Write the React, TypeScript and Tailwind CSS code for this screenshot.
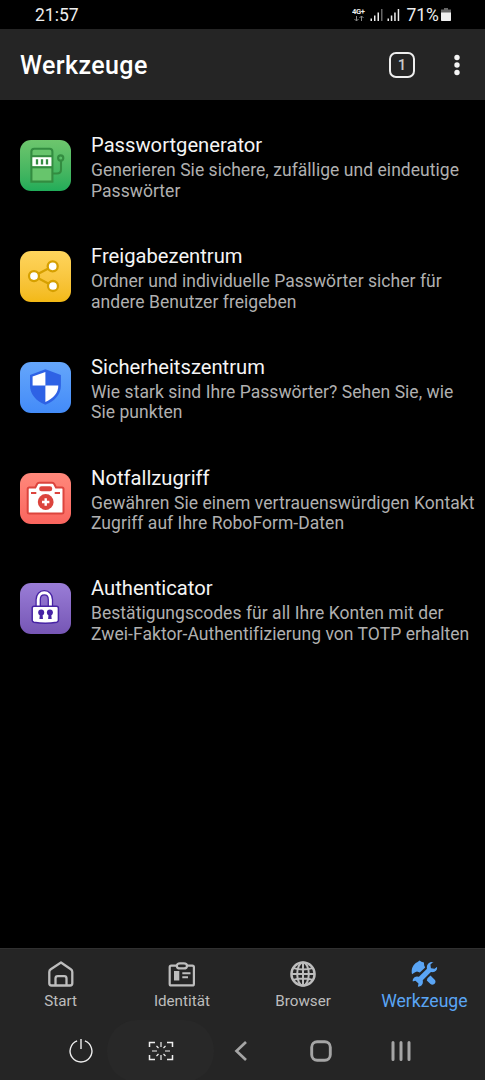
import type { ReactNode } from "react";

function GeneratorArt() {
  return (
    <g fill="none" stroke="#338c40" strokeWidth="2.1">
      <path d="M33 33.5h4c2.500 0 4-1.500 4-4V21" />
      <circle cx="40.700" cy="18" r="2.600" />
      <path d="M11.400 41.600V11.500c0-1.800 1.100-2.800 2.800-2.800h15.400c1.700 0 2.800 1 2.800 2.800v30.100z" fill="#67c56c" />
      <path d="M12 16.200h20" />
      <path d="M12.400 17.300h19v9h-19z" fill="#fff" stroke="none" />
      <path d="M12 27.300h20" />
      <path d="M17 19.300v5.300M22 19.300v5.300M27 19.300v5.300" strokeWidth="2.300" />
    </g>
  );
}

function ShareArt() {
  return (
    <g fill="#fff" stroke="#d6a000" strokeWidth="2.300">
      <path d="M32.700 15.300 14 25.100l19 9.900" fill="none" />
      <circle cx="32.700" cy="15.300" r="5" />
      <circle cx="14" cy="25.100" r="5" />
      <circle cx="33" cy="35" r="5" />
    </g>
  );
}

function ShieldArt() {
  return (
    <g>
      <path d="M25.400 7.200 40.900 13v10.500c0 9-6.200 15.600-15.500 19.200C16.200 39.100 10 32.500 10 23.500V13z" fill="#2e62e5" />
      <path d="M25.400 10v13.600H12.600v-9z" fill="#fff" />
      <path d="M25.400 23.600h12.900c0 7.300-4.600 12.900-12.900 16.300z" fill="#fff" />
    </g>
  );
}

function EmergencyArt() {
  return (
    <g>
      <path d="M9.200 14.500h6.100l1.800-3.500c.5-.9 1-1.200 2-1.200h13.100c1 0 1.500.3 2 1.200l1.800 3.500h6c1 0 1.500.5 1.500 1.500V39c0 1-.5 1.500-1.500 1.500H9.200c-1 0-1.500-.5-1.500-1.500V16c0-1 .5-1.500 1.500-1.500z" fill="#fff" stroke="#dc443d" strokeWidth="2" />
      <rect x="19.200" y="13.300" width="13" height="5" rx="2.300" fill="#dc443d" />
      <path d="M11 20h5.300M34.700 20H40" stroke="#dc443d" strokeWidth="2" />
      <circle cx="25.700" cy="29" r="7.900" fill="#dc443d" />
      <path d="M25.700 25.300v7.400M22 29h7.400" stroke="#fff" strokeWidth="2.400" />
    </g>
  );
}

function LockArt() {
  return (
    <g stroke="#4723a5">
      <path d="M18.200 23v-6.300c0-4.300 2.600-6.900 6.100-6.900s6.100 2.600 6.100 6.900V23" fill="none" strokeWidth="5.500" />
      <path d="M18.200 24v-7.300c0-4.300 2.600-6.900 6.100-6.900s6.100 2.600 6.100 6.900V24" fill="none" stroke="#fff" strokeWidth="2.900" />
      <path d="M14 23.300h22.500c1.300 0 1.900.6 1.900 1.900v12c0 1.100-.5 1.700-1.700 2-7 1.400-15.700 1.400-22.800 0-1.200-.3-1.700-.9-1.700-2v-12c0-1.300.5-1.900 1.800-1.900z" fill="#fff" strokeWidth="1.500" />
      <g fill="#4723a5" stroke="none">
        <circle cx="21.200" cy="29.400" r="3" />
        <circle cx="29.900" cy="29.400" r="3" />
        <path d="M20 30h2.400l.6 6h-3.600zM28.700 30h2.400l.6 6h-3.600z" />
      </g>
    </g>
  );
}

const tools: { title: string; lines: [string, string]; tile: string; art: ReactNode }[] = [
  { title: "Passwortgenerator", lines: ["Generieren Sie sichere, zufällige und eindeutige", "Passwörter"], tile: "from-[#6dc66d] to-[#20ac59]", art: <GeneratorArt /> },
  { title: "Freigabezentrum", lines: ["Ordner und individuelle Passwörter sicher für", "andere Benutzer freigeben"], tile: "from-[#ffd55c] to-[#f3b914]", art: <ShareArt /> },
  { title: "Sicherheitszentrum", lines: ["Wie stark sind Ihre Passwörter? Sehen Sie, wie", "Sie punkten"], tile: "from-[#65a6fb] to-[#438bf8]", art: <ShieldArt /> },
  { title: "Notfallzugriff", lines: ["Gewähren Sie einem vertrauenswürdigen Kontakt", "Zugriff auf Ihre RoboForm-Daten"], tile: "from-[#ff887b] to-[#fa655e]", art: <EmergencyArt /> },
  { title: "Authenticator", lines: ["Bestätigungscodes für all Ihre Konten mit der", "Zwei-Faktor-Authentifizierung von TOTP erhalten"], tile: "from-[#9a7dd7] to-[#7656b5]", art: <LockArt /> },
];

function StatusBar() {
  return (
    <div className="flex h-[29px] shrink-0 items-center pl-[35px] pr-[34px] text-[#eeeeee]">
      <span className="text-[17.5px] leading-[30px]">21:57</span>
      <svg className="ml-auto mr-[5px] h-[29px] w-[50px]" viewBox="0 0 50 29">
        <text x="0" y="14" fontSize="7.600" fontWeight="700" fill="#eee" textLength="13">4G+</text>
        <path d="M4.500 16v5m-2-2 2 2 2-2M9.500 21v-5m-2 2 2-2 2 2" fill="none" stroke="#888" strokeWidth="1" />
        <g fill="#eee">
          <path d="M18.500 18.500H20V21h-1.500zM22 15.500h1.500V21H22zM25.500 12.500H27V21h-1.500z" />
          <path d="M29 9h1.500v12H29z" fill="#666" />
          <path d="M35.500 18.500H37V21h-1.500zM38.800 15.500h1.500V21h-1.500zM42.200 12.500h1.500V21h-1.500zM45.700 9h1.500v12h-1.500z" />
        </g>
      </svg>
      <span className="text-[17.5px] leading-[30px] tracking-[-0.2px]">71%</span>
      <svg className="ml-[2.5px] h-[29px] w-[10px]" viewBox="0 0 10 29">
        <path d="M3 8h4v1.500h3V13H0V9.500h3z" fill="#666" />
        <path d="M0 12.500h10V20c0 .7-.3 1-1 1H1c-.7 0-1-.3-1-1z" fill="#eee" />
      </svg>
    </div>
  );
}

function HomeIcon() {
  return (
    <g fill="none" stroke="#bdbdbd" strokeWidth="2.300" strokeLinejoin="round">
      <path d="m14 2.500 9.800 6.700c1 .7 1.500 1.500 1.500 2.700v11.400c0 1.400-.8 2.200-2.200 2.200H4.500c-1.400 0-2.200-.8-2.200-2.200V11.900c0-1.200.5-2 1.500-2.700z" />
      <path d="M8.500 25.400v-7c0-1.500.8-2.300 2.300-2.300h6.400c1.500 0 2.300.8 2.300 2.300v7" />
    </g>
  );
}

function IdentityIcon() {
  return (
    <g fill="none" stroke="#bdbdbd" strokeWidth="2.200">
      <path d="M9.500 5.700H3.200c-1 0-1.500.5-1.500 1.500v16.700c0 1 .5 1.500 1.500 1.500h21.200c1 0 1.500-.5 1.500-1.500V7.200c0-1-.5-1.500-1.500-1.500h-6.100" />
      <path d="M12 3.400h3.800c2.200 0 3.200 1 3.200 2.500s-1 2.500-3.200 2.500H12c-2.200 0-3.200-1-3.200-2.500s1-2.500 3.200-2.500z" />
      <path d="M14.300 13.200h8.200M14.300 17.300h5.700" strokeWidth="1.900" />
      <path d="M6 11h5.300v9.500H6z" fill="#bdbdbd" stroke="none" />
    </g>
  );
}

function GlobeIcon() {
  return (
    <g fill="none" stroke="#bdbdbd" strokeWidth="2">
      <circle cx="14" cy="14" r="11.600" strokeWidth="2.400" />
      <ellipse cx="14" cy="14" rx="5.800" ry="11.600" />
      <path d="M14 2v24M2.500 14h23M4.300 8.100c6 1.700 13.400 1.700 19.400 0M4.300 19.900c6-1.700 13.400-1.700 19.400 0" />
    </g>
  );
}

function ToolsIcon() {
  return (
    <g fill="#5aa5f5" strokeLinejoin="round">
      <path d="M2 14.200C.9 8.800 3.100 4.200 7.200 2.300L9.600.4l1.800 1.300 2.500.8.300 2.900 1 2-5.400 5-2.800-.9-1.900.7z" />
      <path d="m17.500 18.300 3-2.800 4.200 4.300c2.600 2.700-1.600 6.700-4.200 4.200l-3.700-3.500z" />
      <path d="M24.300 1.900c-4.600-1.600-8.900 1.700-8 6.600l-7.600 7.600c-4.300-.9-7.400 2.200-6.600 6.200l3.200-.8 2.500 2.300-.7 3.400c4.400.6 7.100-2.700 6.300-6.700l7.700-7.800c4.600.8 7.700-2.600 6.300-6.900l-2.900 2.200-3-.4-.4-2.900z" stroke="#252525" strokeWidth="1.300" />
    </g>
  );
}

const tabs: { label: string; icon: ReactNode; style: string }[] = [
  { label: "Start", icon: <HomeIcon />, style: "text-[15.2px] text-[#bdbdbd]" },
  { label: "Identität", icon: <IdentityIcon />, style: "text-[15.2px] text-[#bdbdbd]" },
  { label: "Browser", icon: <GlobeIcon />, style: "text-[15.2px] text-[#bdbdbd]" },
  { label: "Werkzeuge", icon: <ToolsIcon />, style: "text-[17.6px] text-[#5aa5f5]" },
];

function NavigationBar() {
  return (
    <div className="grid h-[62px] grid-cols-[53px_107px_53px_107px_54px] items-center pl-[54px]">
      <svg className="size-[28px] justify-self-center" viewBox="0 0 28 28" fill="none" stroke="#eee" strokeWidth="1.400">
        <path d="M10.100 3.900a10.900 10.900 0 1 0 7.800 0M14 2v10" />
      </svg>
      <div className="flex h-[62px] items-center justify-center rounded-[30px] bg-[#282828]">
        <svg className="h-[20px] w-[26px]" viewBox="0 0 26 20" fill="none" stroke="#eee" strokeWidth="1.500">
          <path d="M1.500 6V1.500H7M19 1.500h5.500V6M24.500 14v4.500H19M7 18.500H1.500V14" />
          <path d="M13 1v5M13 14v5M4 10h5M17 10h5M8.500 5l2 2M17.500 5l-2 2M8.500 15l2-2M17.500 15l-2-2" strokeWidth="1.200" />
        </svg>
      </div>
      <svg className="size-[24px] justify-self-center" viewBox="0 0 24 24" fill="none" stroke="#a5a5a5" strokeWidth="2.700">
        <path d="m17 3-9.500 9 9.500 9" />
      </svg>
      <svg className="size-[24px] justify-self-center" viewBox="0 0 24 24" fill="none" stroke="#a5a5a5" strokeWidth="2.900">
        <rect x="2.700" y="2.700" width="18.600" height="18.600" rx="5.500" />
      </svg>
      <svg className="size-[24px] justify-self-center" viewBox="0 0 24 24" stroke="#a5a5a5" strokeWidth="3" strokeLinecap="round">
        <path d="M4 3.500v17M12 3.500v17M20 3.500v17" />
      </svg>
    </div>
  );
}

export default function App() {
  return (
    <div className="flex h-[1080px] w-[485px] flex-col overflow-hidden bg-black font-[Roboto,sans-serif]">
      <StatusBar />
      <header className="flex h-[71px] shrink-0 items-center bg-[#252525] pl-[20px] pr-[14px]">
        <h1 className="pt-[3px] text-[25px] font-medium leading-[30px] tracking-[0.4px] text-white">Werkzeuge</h1>
        <div className="ml-auto flex size-[26px] items-center justify-center rounded-[7px] border-2 border-[#eeeeee] pt-[1px] text-[15px] font-medium leading-none text-[#cccccc]">1</div>
        <svg className="ml-[28px] h-[24px] w-[28px]" viewBox="0 0 28 24" fill="#f5f5f5">
          <circle cx="14" cy="4.500" r="2.700" />
          <circle cx="14" cy="12" r="2.700" />
          <circle cx="14" cy="19.500" r="2.700" />
        </svg>
      </header>
      <main className="flex grow flex-col pt-[34.3px]">
        {tools.map((tool) => (
          <div key={tool.title} className="flex h-[110.8px] shrink-0 pl-[20px]">
            <div className={`mt-[6px] size-[51px] shrink-0 rounded-[11px] bg-linear-to-b ${tool.tile}`}>
              <svg className="size-full" viewBox="0 0 51 51">{tool.art}</svg>
            </div>
            <div className="ml-[20px] whitespace-nowrap">
              <h2 className="text-[20.2px] leading-[23px] text-[#f5f5f5]">{tool.title}</h2>
              <p className="mt-[3px] text-[17.5px] leading-[20.500px] tracking-[0.045px] text-[#b0b0b0]">
                {tool.lines[0]}
                <br />
                {tool.lines[1]}
              </p>
            </div>
          </div>
        ))}
      </main>
      <footer className="h-[132px] shrink-0 border-t border-[#303030] bg-[#252525]">
        <nav className="grid h-[71px] grid-cols-4">
          {tabs.map((tab) => (
            <div key={tab.label} className={`flex flex-col items-center pt-[11px] ${tab.style}`}>
              <svg className="size-[28px]" viewBox="0 0 28 28">{tab.icon}</svg>
              <span className="mt-[3px] leading-[20px]">{tab.label}</span>
            </div>
          ))}
        </nav>
        <NavigationBar />
      </footer>
    </div>
  );
}
